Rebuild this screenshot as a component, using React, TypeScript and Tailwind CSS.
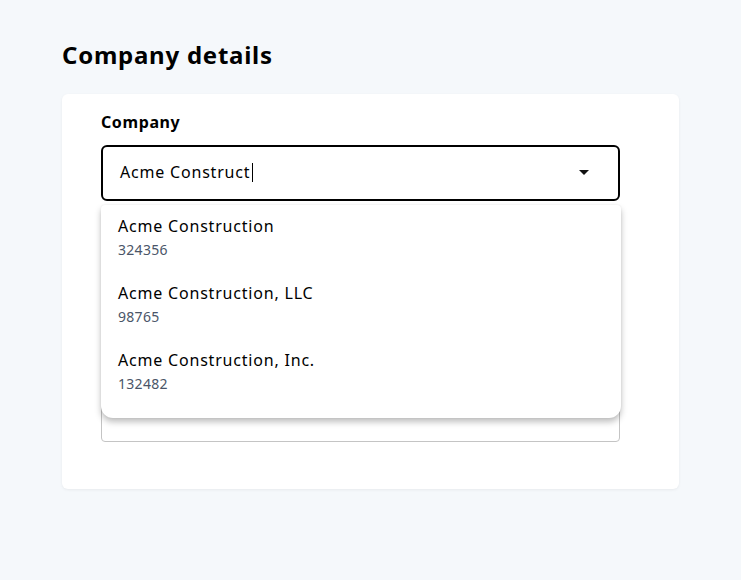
export default function App() {
  const companies = [
    { name: 'Acme Construction', id: '324356' },
    { name: 'Acme Construction, LLC', id: '98765' },
    { name: 'Acme Construction, Inc.', id: '132482' },
  ];

  return (
    <div
      className="min-h-[580px] bg-[#f5f8fb] px-[62px] pt-[40px] text-black"
      style={{ fontFamily: '"Noto Sans", "Open Sans", sans-serif' }}
    >
      <h1 className="text-[24px] font-bold leading-[30px] tracking-[0.75px]">Company details</h1>

      <div className="mt-[24px] rounded-[6px] bg-white pb-[47px] pl-[39px] pr-[59px] pt-4 shadow-[0_1px_3px_rgba(0,0,0,0.06)]">
        {/* Company */}
        <div className="relative">
          <label className="block text-[16px] font-bold leading-6 tracking-[0.6px]">Company</label>
          <div className="mt-[11px] flex h-[56px] items-center rounded-[6px] border-2 border-black pb-[2px] pl-[17px] pr-[29px]">
            <span className="text-[16px] leading-6 tracking-[0.8px]">Acme Construct</span>
            <span className="ml-[2px] inline-block h-[19px] w-px bg-black" />
            <svg className="ml-auto" width="10" height="5" viewBox="0 0 10 5">
              <path d="M0 0 L10 0 L5 5 Z" fill="#111" />
            </svg>
          </div>

          <div className="absolute left-0 right-[-1px] top-[95px] z-10 rounded-b-[12px] rounded-t-[4px] bg-white pb-[12px] shadow-[0_4px_6px_rgba(0,0,0,0.25),0_0_2px_rgba(0,0,0,0.08)]">
            {companies.map((c) => (
              <div key={c.id} className="h-[67px] pl-[17px] pt-[11px]">
                <div className="text-[16px] leading-5 tracking-[0.8px]">{c.name}</div>
                <div className="mt-[6px] text-[14px] leading-4 tracking-[0.3px] text-[#4a5568]">{c.id}</div>
              </div>
            ))}
          </div>
        </div>

        {/* fields below, covered by the open list */}
        <div className="mt-[65px] h-[56px] rounded-[4px] border border-[#c4c4c4]" />
        <div className="mt-[64px] h-[56px] rounded-[4px] border border-[#c4c4c4]" />
      </div>
    </div>
  );
}
